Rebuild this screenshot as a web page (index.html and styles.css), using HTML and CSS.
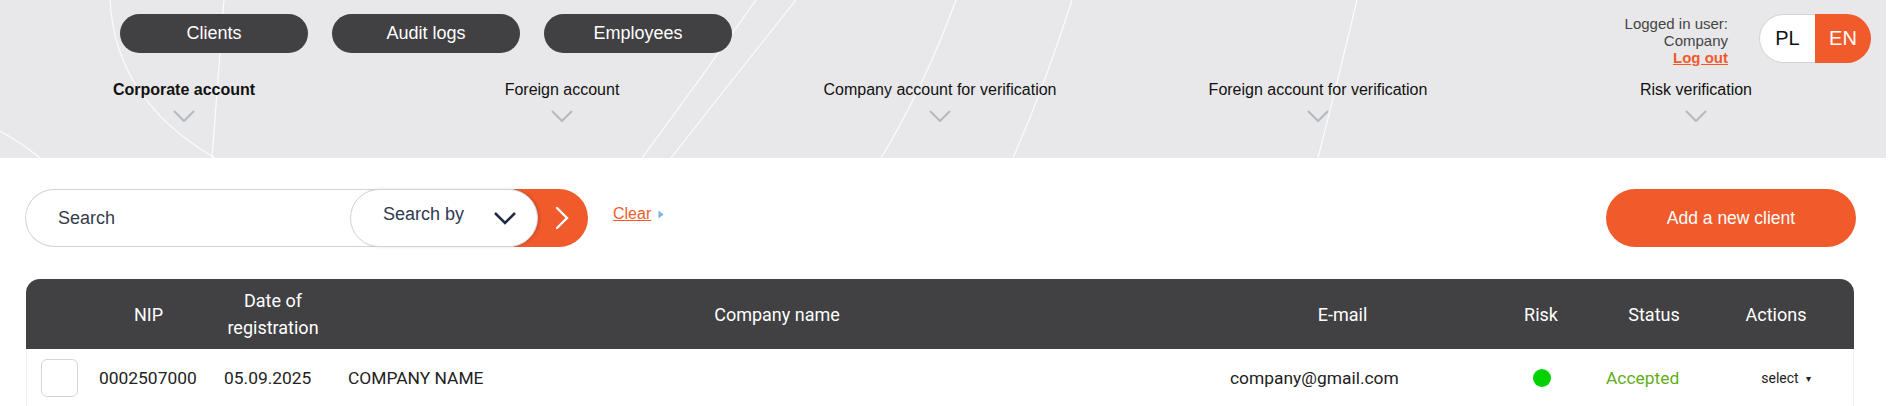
FILE: index.html
```html
<!DOCTYPE html>
<html lang="en">
<head>
<meta charset="utf-8">
<title>Clients</title>
<link rel="stylesheet" href="styles.css">
</head>
<body>
<div class="page">
  <header class="top">
    <svg class="deco" width="1886" height="158" viewBox="0 0 1886 158" aria-hidden="true">
      <path d="M110 0 Q115 100 215 158"/>
      <path d="M224 0 Q218 80 212 158"/>
      <path d="M0 131 Q22 143 40 158"/>
      <path d="M756 0 Q700 80 642 158"/>
      <path d="M796 0 Q740 70 671 158"/>
      <path d="M956 0 Q925 85 881 158"/>
      <path d="M1072 0 Q1045 85 1013 158"/>
      <path d="M1357 0 Q1338 80 1318 158"/>
    </svg>
    <div class="topbar">
      <nav class="mainnav">
        <a class="navbtn">Clients</a>
        <a class="navbtn">Audit logs</a>
        <a class="navbtn">Employees</a>
      </nav>
      <div class="user">
        <div class="login">
          <div>Logged in user:</div>
          <div>Company</div>
          <a class="logout">Log out</a>
        </div>
        <div class="lang">
          <span class="lang-pl">PL</span>
          <span class="lang-en">EN</span>
        </div>
      </div>
    </div>
    <div class="tabs">
      <div class="tab tab-active"><span>Corporate account</span><svg class="tab-chev" width="22" height="12" viewBox="0 0 22 12"><path d="M1 1 L11 11 L21 1"/></svg></div>
      <div class="tab"><span>Foreign account</span><svg class="tab-chev" width="22" height="12" viewBox="0 0 22 12"><path d="M1 1 L11 11 L21 1"/></svg></div>
      <div class="tab"><span>Company account for verification</span><svg class="tab-chev" width="22" height="12" viewBox="0 0 22 12"><path d="M1 1 L11 11 L21 1"/></svg></div>
      <div class="tab"><span>Foreign account for verification</span><svg class="tab-chev" width="22" height="12" viewBox="0 0 22 12"><path d="M1 1 L11 11 L21 1"/></svg></div>
      <div class="tab"><span>Risk verification</span><svg class="tab-chev" width="22" height="12" viewBox="0 0 22 12"><path d="M1 1 L11 11 L21 1"/></svg></div>
    </div>
  </header>

  <section class="toolbar">
    <div class="search-group">
      <div class="search-input">Search</div>
      <div class="search-by">
        <span>Search by</span>
        <svg class="sb-chev" width="24" height="14" viewBox="0 0 24 14"><path d="M2 2 L12 12 L22 2"/></svg>
      </div>
      <div class="search-go">
        <svg width="16" height="24" viewBox="0 0 16 24"><path d="M3 2 L13 12 L3 22"/></svg>
      </div>
    </div>
    <a class="clear">Clear</a>
    <svg class="clear-arrow" width="6" height="9" viewBox="0 0 6 9"><path d="M0.5 0.5 L5.5 4.5 L0.5 8.5 Z"/></svg>
    <div class="spacer"></div>
    <a class="add-btn">Add a new client</a>
  </section>

  <section class="grid-table">
    <div class="thead">
      <div class="th"></div>
      <div class="th">NIP</div>
      <div class="th">Date of<br>registration</div>
      <div class="th">Company name</div>
      <div class="th th-email">E-mail</div>
      <div class="th">Risk</div>
      <div class="th">Status</div>
      <div class="th th-actions">Actions</div>
    </div>
    <div class="trow">
      <div class="td td-check"><span class="checkbox"></span></div>
      <div class="td td-left">0002507000</div>
      <div class="td td-left">05.09.2025</div>
      <div class="td td-left">COMPANY NAME</div>
      <div class="td td-email">company@gmail.com</div>
      <div class="td td-center"><span class="dot"></span></div>
      <div class="td td-status">Accepted</div>
      <div class="td td-actions">select <span class="caret">&#9662;</span></div>
    </div>
  </section>
</div>
</body>
</html>
```

FILE: styles.css
```css
* { box-sizing: border-box; }

html, body {
  margin: 0;
  padding: 0;
  background: #ffffff;
}

body {
  font-family: "Liberation Sans", Arial, sans-serif;
  color: #111;
}

.page {
  width: 1886px;
  height: 406px;
  overflow: hidden;
}

a { cursor: pointer; }

/* ---------- Header ---------- */
.top {
  position: relative;
  height: 158px;
  background: #e8e8ea;
  overflow: hidden;
}

.deco {
  position: absolute;
  left: 0;
  top: 0;
  pointer-events: none;
}
.deco path {
  fill: none;
  stroke: #ffffff;
  stroke-width: 1.2;
  opacity: 0.85;
}

.topbar {
  position: relative;
  display: flex;
  justify-content: space-between;
  align-items: flex-start;
  height: 63px;
  padding: 14px 15px 0 120px;
}

.mainnav {
  display: flex;
  gap: 24px;
}

.navbtn {
  display: flex;
  align-items: center;
  justify-content: center;
  width: 188px;
  height: 39px;
  border-radius: 20px;
  background: #414042;
  color: #ffffff;
  font-size: 18px;
}

.user {
  display: flex;
  align-items: flex-start;
  gap: 31px;
}

.login {
  text-align: right;
  font-size: 15px;
  line-height: 17px;
  color: #444;
  margin-top: 1px;
}

.logout {
  color: #f15a2b;
  font-weight: bold;
  text-decoration: underline;
}

.lang {
  display: flex;
  height: 49px;
  font-size: 20px;
}
.lang-pl {
  display: flex;
  align-items: center;
  justify-content: center;
  width: 56px;
  background: #ffffff;
  color: #111;
  border: 1px solid #d4d4d6;
  border-right: none;
  border-radius: 25px 0 0 25px;
}
.lang-en {
  display: flex;
  align-items: center;
  justify-content: center;
  width: 56px;
  background: #f15a2b;
  color: #ffffff;
  border-radius: 0 25px 25px 0;
}

.tabs {
  position: relative;
  display: grid;
  grid-template-columns: repeat(5, 378px);
  margin-left: -5px;
  padding-top: 17px;
}

.tab {
  display: flex;
  flex-direction: column;
  align-items: center;
  font-size: 16px;
  line-height: 19px;
  color: #111;
}
.tab-active { font-weight: bold; }

.tab-chev {
  margin-top: 11px;
}
.tab-chev path {
  fill: none;
  stroke: #b4b7bd;
  stroke-width: 2;
}

/* ---------- Toolbar ---------- */
.toolbar {
  display: flex;
  align-items: center;
  padding: 31px 30px 0 25px;
}

.search-group {
  display: flex;
  height: 58px;
}

.search-input {
  position: relative;
  z-index: 1;
  display: flex;
  align-items: center;
  width: 355px;
  padding-left: 32px;
  border: 1px solid #cfd4dc;
  border-right: none;
  border-radius: 29px 0 0 29px;
  background: #ffffff;
  font-size: 18px;
  color: #363c4a;
}

.search-by {
  position: relative;
  z-index: 3;
  display: flex;
  align-items: center;
  width: 188px;
  margin-left: -30px;
  padding: 0 20px 0 32px;
  border: 1px solid #cfd4dc;
  border-radius: 29px;
  background: #ffffff;
  box-shadow: 2px 0 3px rgba(0, 0, 0, 0.12);
  font-size: 18px;
  color: #2f3a50;
}
.search-by span {
  flex: 1;
  margin-top: -8px;
}
.sb-chev path {
  fill: none;
  stroke: #1f2a44;
  stroke-width: 2.5;
}

.search-go {
  position: relative;
  z-index: 2;
  display: flex;
  align-items: center;
  justify-content: flex-end;
  width: 75px;
  margin-left: -25px;
  padding-right: 18px;
  background: #f15a2b;
  border-radius: 0 29px 29px 0;
}
.search-go path {
  fill: none;
  stroke: #ffffff;
  stroke-width: 2.4;
  stroke-linecap: round;
}

.clear {
  margin-left: 25px;
  margin-top: -8px;
  font-size: 16px;
  color: #f15a2b;
  text-decoration: underline;
}
.clear-arrow {
  margin-left: 7px;
  margin-top: -8px;
}
.clear-arrow path { fill: #7fb2e5; }

.spacer { flex: 1; }

.add-btn {
  display: flex;
  align-items: center;
  justify-content: center;
  width: 250px;
  height: 58px;
  border-radius: 29px;
  background: #f15a2b;
  color: #ffffff;
  font-size: 17.5px;
}

/* ---------- Table ---------- */
.grid-table {
  margin: 32px 32px 0 26px;
  font-family: Roboto, "Liberation Sans", sans-serif;
}

.thead,
.trow {
  display: grid;
  grid-template-columns: 60px 125px 124px 884px 261px 122px 104px 148px;
}

.thead {
  height: 70px;
  background: #414042;
  border-radius: 14px 14px 0 0;
}

.th {
  display: flex;
  align-items: center;
  justify-content: center;
  text-align: center;
  color: #ffffff;
  font-size: 18px;
  font-weight: 400;
  line-height: 27px;
}
.th-email { padding-right: 14px; }
.th-actions { padding-right: 8px; }

.trow {
  height: 58px;
  background: #ffffff;
  border-left: 1px solid #f0f0f0;
  border-right: 1px solid #f0f0f0;
}

.td {
  display: flex;
  align-items: center;
  font-size: 17.4px;
  color: #222;
  white-space: nowrap;
}
.td-check { padding-left: 14px; }
.td-left { padding-left: 12px; }
.td-email { padding-left: 10px; }
.td-center { justify-content: center; }
.td-status {
  padding-left: 3px;
  color: #5fae1a;
}
.td-actions {
  justify-content: center;
  padding-left: 10px;
  font-size: 14px;
}
.caret {
  margin-left: 7px;
  font-size: 10px;
}

.checkbox {
  display: block;
  width: 37px;
  height: 38px;
  border: 1px solid #d3d7dd;
  border-radius: 6px;
  background: #ffffff;
}

.dot {
  display: block;
  width: 18px;
  height: 18px;
  border-radius: 50%;
  background: #00d200;
}
```
